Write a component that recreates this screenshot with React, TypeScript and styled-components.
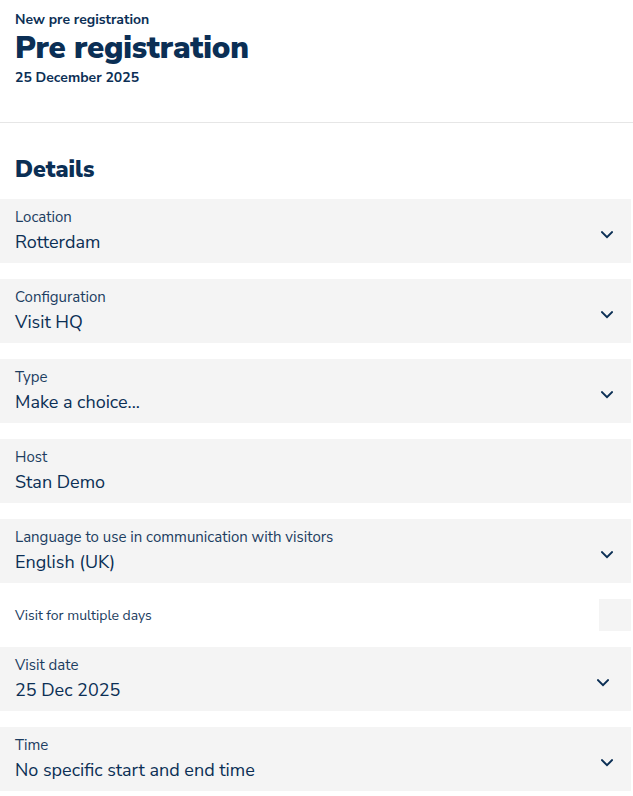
import React from "react";
import styled, { createGlobalStyle } from "styled-components";

const Global = createGlobalStyle`
  html, body { margin: 0; padding: 0; background: #fff; }
  body { font-family: "Nunito Sans", Lato, "Open Sans", sans-serif; color: #0b2f55; }
  * { box-sizing: border-box; }
`;

const Page = styled.div`
  width: 633px;
  display: flex;
  flex-direction: column;
`;

const Header = styled.header`
  padding: 12px 15px 0;
  height: 123px;
  border-bottom: 1px solid #e6e6e6;
  display: flex;
  flex-direction: column;
`;

const Kicker = styled.div`
  font-size: 14px;
  font-weight: 700;
  line-height: 16px;
`;

const Title = styled.h1`
  margin: 2px 0 0;
  font-size: 31px;
  font-weight: 900;
  line-height: 37px;
  letter-spacing: -0.2px;
`;

const DateLine = styled.div`
  margin-top: 2px;
  font-size: 14px;
  font-weight: 700;
  line-height: 18px;
`;

const Section = styled.section`
  padding-top: 30px;
  padding-right: 2px;
  display: flex;
  flex-direction: column;
`;

const SectionTitle = styled.h2`
  margin: 0 0 12px 15px;
  font-size: 23px;
  font-weight: 900;
  line-height: 34px;
`;

const Field = styled.div<{ $chevronRight?: number }>`
  height: 64px;
  margin-bottom: 16px;
  background: #f4f4f4;
  padding: 8px 15px 0;
  display: flex;
  align-items: center;
  justify-content: space-between;
  padding-right: ${(p) => p.$chevronRight ?? 18}px;
`;

const FieldText = styled.div`
  display: flex;
  flex-direction: column;
  align-self: flex-start;
  padding-top: 1px;
`;

const Label = styled.div`
  font-size: 15px;
  line-height: 18px;
  color: #1c3d61;
`;

const Value = styled.div`
  margin-top: 3px;
  font-size: 18px;
  line-height: 26px;
  color: #0b2f55;
`;

const CheckRow = styled.div`
  height: 64px;
  padding-left: 15px;
  display: flex;
  align-items: center;
  justify-content: space-between;
`;

const CheckLabel = styled.div`
  font-size: 14px;
  color: #1c3d61;
`;

const CheckBox = styled.div`
  width: 32px;
  height: 32px;
  background: #f4f4f4;
`;

const Chevron = () => (
  <svg width="12" height="8" viewBox="0 0 12 8" fill="none">
    <path d="M1 1.2 L6 6.2 L11 1.2" stroke="#0b2f55" strokeWidth="2" strokeLinecap="square" />
  </svg>
);

type F = { label: string; value: string; chevron?: boolean; right?: number };

const fieldsA: F[] = [
  { label: "Location", value: "Rotterdam", chevron: true },
  { label: "Configuration", value: "Visit HQ", chevron: true },
  { label: "Type", value: "Make a choice...", chevron: true },
  { label: "Host", value: "Stan Demo" },
];

const lang: F = { label: "Language to use in communication with visitors", value: "English (UK)", chevron: true };

const fieldsB: F[] = [
  { label: "Visit date", value: "25 Dec 2025", chevron: true, right: 22 },
  { label: "Time", value: "No specific start and end time", chevron: true },
];

const FieldRow = ({ f, last }: { f: F; last?: boolean }) => (
  <Field $chevronRight={f.right} style={last ? { marginBottom: 0 } : undefined}>
    <FieldText>
      <Label>{f.label}</Label>
      <Value>{f.value}</Value>
    </FieldText>
    {f.chevron && <Chevron />}
  </Field>
);

export default function App() {
  return (
    <Page>
      <Global />
      <Header>
        <Kicker>New pre registration</Kicker>
        <Title>Pre registration</Title>
        <DateLine>25 December 2025</DateLine>
      </Header>
      <Section>
        <SectionTitle>Details</SectionTitle>
        {fieldsA.map((f) => (
          <FieldRow key={f.label} f={f} />
        ))}
        <FieldRow f={lang} last />
        <CheckRow>
          <CheckLabel>Visit for multiple days</CheckLabel>
          <CheckBox />
        </CheckRow>
        {fieldsB.map((f) => (
          <FieldRow key={f.label} f={f} />
        ))}
      </Section>
    </Page>
  );
}
